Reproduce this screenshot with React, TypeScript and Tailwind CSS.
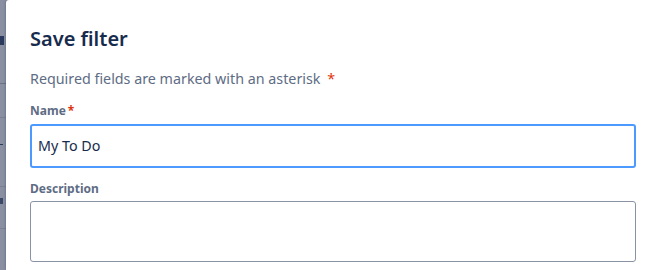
import React from "react";

export default function App() {
  return (
    <div
      className="w-[655px] h-[270px] flex overflow-hidden bg-[#8a90a2]"
      style={{ fontFamily: '"Noto Sans", "Open Sans", sans-serif' }}
    >
      <div className="w-[6px] shrink-0 flex flex-col">
        <div className="h-[36px]" />
        <div className="w-[4px] h-[9px] bg-[#2b3a5c]" />
        <div className="h-[38px]" />
        <div className="h-[1px] bg-[#6b7286]" />
        <div className="h-[33px]" />
        <div className="h-[1px] bg-[#7a8194]" />
        <div className="h-[26px]" />
        <div className="w-[3px] h-[1px] bg-[#2b3a5c]" />
        <div className="h-[41px]" />
        <div className="h-[1px] bg-[#7a8194]" />
        <div className="h-[11px]" />
        <div className="w-[3px] h-[6px] bg-[#3b4866]" />
        <div className="h-[24px]" />
        <div className="h-[1px] bg-[#7a8194]" />
      </div>
      <div className="flex-1 bg-white rounded-tl-[3px] pl-[24px] pr-[19px] pt-[27px] shadow-[-1px_0_2px_rgba(9,30,66,0.2)]">
        <h1 className="text-[20px] leading-[24px] font-semibold text-[#172b4d]">Save filter</h1>
        <p className="mt-[18px] text-[14.3px] leading-[20px] text-[#5e6c84]">
          Required fields are marked with an asterisk <span className="text-[#de350b] ml-[3px]">*</span>
        </p>
        <div className="mt-[14px] text-[12px] leading-[16px] font-bold text-[#5e6c84]">
          Name<span className="text-[#de350b] ml-[2px]">*</span>
        </div>
        <div className="mt-[5px] h-[44px] border-2 border-[#4c9aff] rounded-[3px] flex items-center px-[6px] text-[14.3px] text-[#172b4d]">
          My To Do
        </div>
        <div className="mt-[13px] text-[12px] leading-[16px] font-bold text-[#5e6c84]">Description</div>
        <div className="mt-[4px] h-[61px] border border-[#8993a4] rounded-[3px]" />
      </div>
    </div>
  );
}
